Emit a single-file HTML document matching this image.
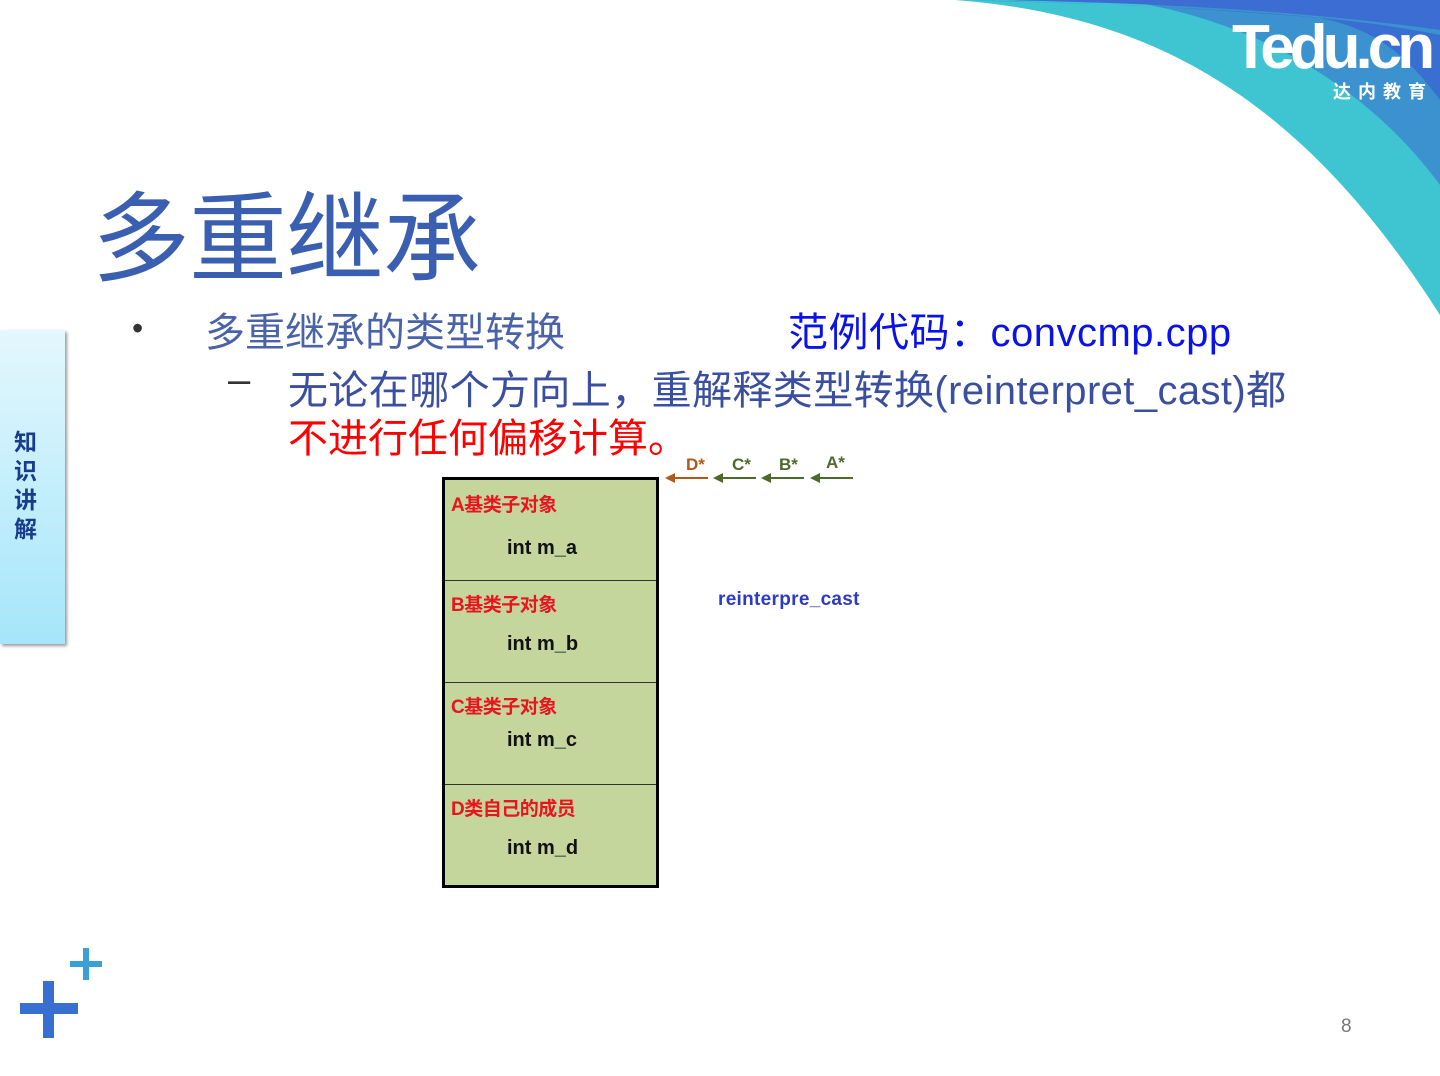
<!DOCTYPE html>
<html><head><meta charset="utf-8"><style>
body{margin:0;width:1440px;height:1076px;background:#fff;position:relative;overflow:hidden;font-family:"Liberation Sans","Noto Sans CJK SC",sans-serif}
.a{position:absolute;white-space:nowrap}
.box{position:absolute;left:442px;top:477px;width:211px;height:405px;border:3px solid #000;background:#c4d69c}
.sep{position:absolute;left:0;right:0;height:1px;background:#333}
.red{color:#e8141e;font-weight:bold;font-size:19px;position:absolute;left:6px;letter-spacing:-0.5px}
.int{font-weight:bold;font-size:20px;position:absolute;left:62px;color:#111}
</style></head><body>
<svg class="a" style="left:0;top:0" width="1440" height="1076">
<path d="M955,0 C1150,15 1300,95 1440,315 L1440,0 Z" fill="#3ec5d1"/>
<path d="M1120,0 C1260,20 1370,90 1440,185 L1440,0 Z" fill="#3b92cf"/>
<path d="M960,0 C1150,5 1330,12 1440,35 L1440,100 C1410,60 1380,30 1320,18 C1200,8 1100,3 960,0 Z" fill="#3a6fd2"/>
<path d="M1000,0 L1440,0 L1440,30 C1300,10 1150,3 1000,0Z" fill="#3b6dd2"/>
<rect x="20" y="1003" width="58" height="11" fill="#3a6fd2"/>
<rect x="43" y="981" width="11" height="57" fill="#3a6fd2"/>
<rect x="70" y="961" width="32" height="6" fill="#3aa0d8"/>
<rect x="83" y="948" width="6" height="32" fill="#3aa0d8"/>
<line x1="668" y1="478" x2="708" y2="478" stroke="#b0581a" stroke-width="2"/><path d="M665,478 l10,-5 v10z" fill="#b0581a"/>
<line x1="716" y1="478" x2="756" y2="478" stroke="#4e6a2a" stroke-width="2"/><path d="M713,478 l10,-5 v10z" fill="#4e6a2a"/>
<line x1="764" y1="478" x2="804" y2="478" stroke="#4e6a2a" stroke-width="2"/><path d="M761,478 l10,-5 v10z" fill="#4e6a2a"/>
<line x1="813" y1="478" x2="853" y2="478" stroke="#4e6a2a" stroke-width="2"/><path d="M810,478 l10,-5 v10z" fill="#4e6a2a"/>
</svg>
<div class="a" style="left:1232px;top:12px;color:#fff;font-weight:bold;font-size:62px;letter-spacing:-5px">Tedu.cn</div>
<div class="a" style="left:1333px;top:78px;color:#fff;font-weight:bold;font-size:18px;letter-spacing:7px">达内教育</div>
<div class="a" style="left:0;top:330px;width:65px;height:314px;background:linear-gradient(#e4f7fd,#a5e6fa);box-shadow:2px 2px 3px #999"></div>
<div class="a" style="left:14px;top:428px;width:26px;font-weight:bold;font-size:23px;line-height:29px;color:#1a3c8e;white-space:normal">知识讲解</div>
<div class="a" style="left:92px;top:160px;font-size:98px;color:#3a5fb0;letter-spacing:-1px">多重继承</div>
<div class="a" style="left:132px;top:310px;font-size:32px;color:#333">•</div>
<div class="a" style="left:205px;top:300px;font-size:40px;color:#4a63a8">多重继承的类型转换</div>
<div class="a" style="left:788px;top:300px;font-size:40px;color:#0a12e8;letter-spacing:0.5px">范例代码：convcmp.cpp</div>
<div class="a" style="left:228px;top:358px;font-size:40px;color:#333">–</div>
<div class="a" style="left:288px;top:358px;font-size:40px;color:#3a4fa0;letter-spacing:0.4px">无论在哪个方向上，重解释类型转换(reinterpret_cast)都</div>
<div class="a" style="left:288px;top:406px;font-size:40px;color:#f00">不进行任何偏移计算。</div>
<div class="a" style="left:686px;top:455px;font-size:17px;font-weight:bold;color:#b0581a">D*</div>
<div class="a" style="left:732px;top:455px;font-size:17px;font-weight:bold;color:#4e6a2a">C*</div>
<div class="a" style="left:779px;top:455px;font-size:17px;font-weight:bold;color:#4e6a2a">B*</div>
<div class="a" style="left:826px;top:453px;font-size:17px;font-weight:bold;color:#4e6a2a">A*</div>
<div class="a" style="left:718px;top:589px;font-size:19px;font-weight:bold;color:#2c3bc0;letter-spacing:0.3px">reinterpre_cast</div>
<div class="box">
<div class="red" style="top:10px">A基类子对象</div><div class="int" style="top:57px">int m_a</div>
<div class="sep" style="top:100px"></div>
<div class="red" style="top:110px">B基类子对象</div><div class="int" style="top:153px">int m_b</div>
<div class="sep" style="top:202px"></div>
<div class="red" style="top:212px">C基类子对象</div><div class="int" style="top:249px">int m_c</div>
<div class="sep" style="top:304px"></div>
<div class="red" style="top:314px">D类自己的成员</div><div class="int" style="top:357px">int m_d</div>
</div>
<div class="a" style="left:1341px;top:1016px;font-size:19px;color:#777">8</div>
</body></html>
